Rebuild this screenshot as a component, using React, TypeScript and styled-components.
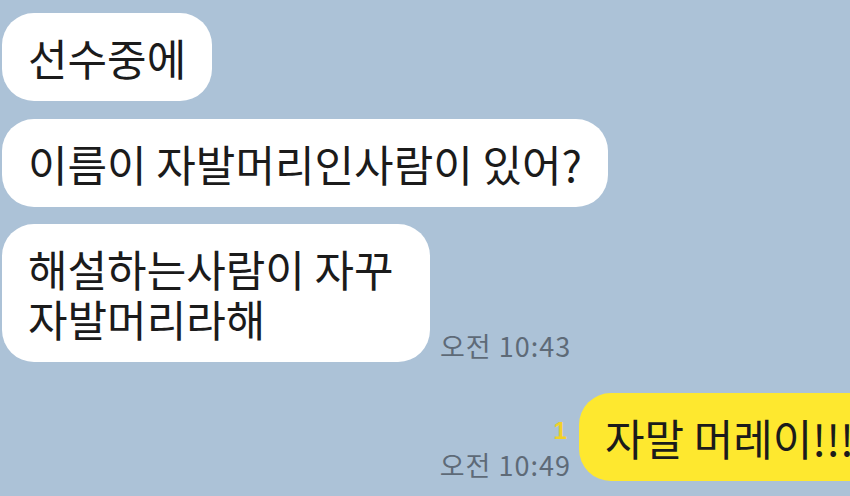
import styled, { createGlobalStyle } from 'styled-components';

const GlobalStyle = createGlobalStyle`
  html, body {
    margin: 0;
    padding: 0;
    background: #acc2d7;
  }
  body {
    font-family: "Noto Sans CJK KR", "Noto Sans", sans-serif;
  }
`;

const Screen = styled.div`
  width: 850px;
  height: 496px;
  overflow: hidden;
  background: #acc2d7;
  display: flex;
  flex-direction: column;
  padding: 13px 0 0 2px;
  box-sizing: border-box;
`;

const Row = styled.div<{ $mine?: boolean; $gap?: number }>`
  display: flex;
  align-items: flex-end;
  gap: ${({ $mine }) => ($mine ? 8 : 10)}px;
  justify-content: ${({ $mine }) => ($mine ? 'flex-end' : 'flex-start')};
  margin-top: ${({ $gap }) => $gap ?? 0}px;
`;

const Bubble = styled.div<{ $mine?: boolean; $width?: number }>`
  flex-shrink: 0;
  box-sizing: border-box;
  width: ${({ $width }) => ($width ? `${$width}px` : 'auto')};
  background: ${({ $mine }) => ($mine ? '#fee82f' : '#ffffff')};
  color: #1b1b1b;
  border-radius: 32px;
  padding: 19px 26px;
  font-size: 43px;
  line-height: 50px;
  white-space: pre;
  margin-right: ${({ $mine }) => ($mine ? '-30px' : '0')};
`;

const Meta = styled.div`
  display: flex;
  flex-direction: column;
  align-items: flex-end;
  padding-bottom: 2px;
`;

const Unread = styled.span`
  color: #f0d12a;
  font-family: "Liberation Sans", "Roboto", sans-serif;
  font-size: 24px;
  font-weight: 700;
  line-height: 24px;
  margin-bottom: 8px;
  margin-right: 4px;
`;

const Time = styled.span`
  color: #5e6a77;
  font-size: 27px;
  line-height: 28px;
  letter-spacing: 1px;
  white-space: nowrap;
`;

export default function App() {
  return (
    <>
      <GlobalStyle />
      <Screen>
        <Row>
          <Bubble>선수중에</Bubble>
        </Row>
        <Row $gap={18}>
          <Bubble>이름이 자발머리인사람이 있어?</Bubble>
        </Row>
        <Row $gap={17}>
          <Bubble $width={428}>{'해설하는사람이 자꾸\n자발머리라해'}</Bubble>
          <Meta>
            <Time>오전 10:43</Time>
          </Meta>
        </Row>
        <Row $mine $gap={31}>
          <Meta>
            <Unread>1</Unread>
            <Time>오전 10:49</Time>
          </Meta>
          <Bubble $mine>자말 머레이!!!</Bubble>
        </Row>
      </Screen>
    </>
  );
}
